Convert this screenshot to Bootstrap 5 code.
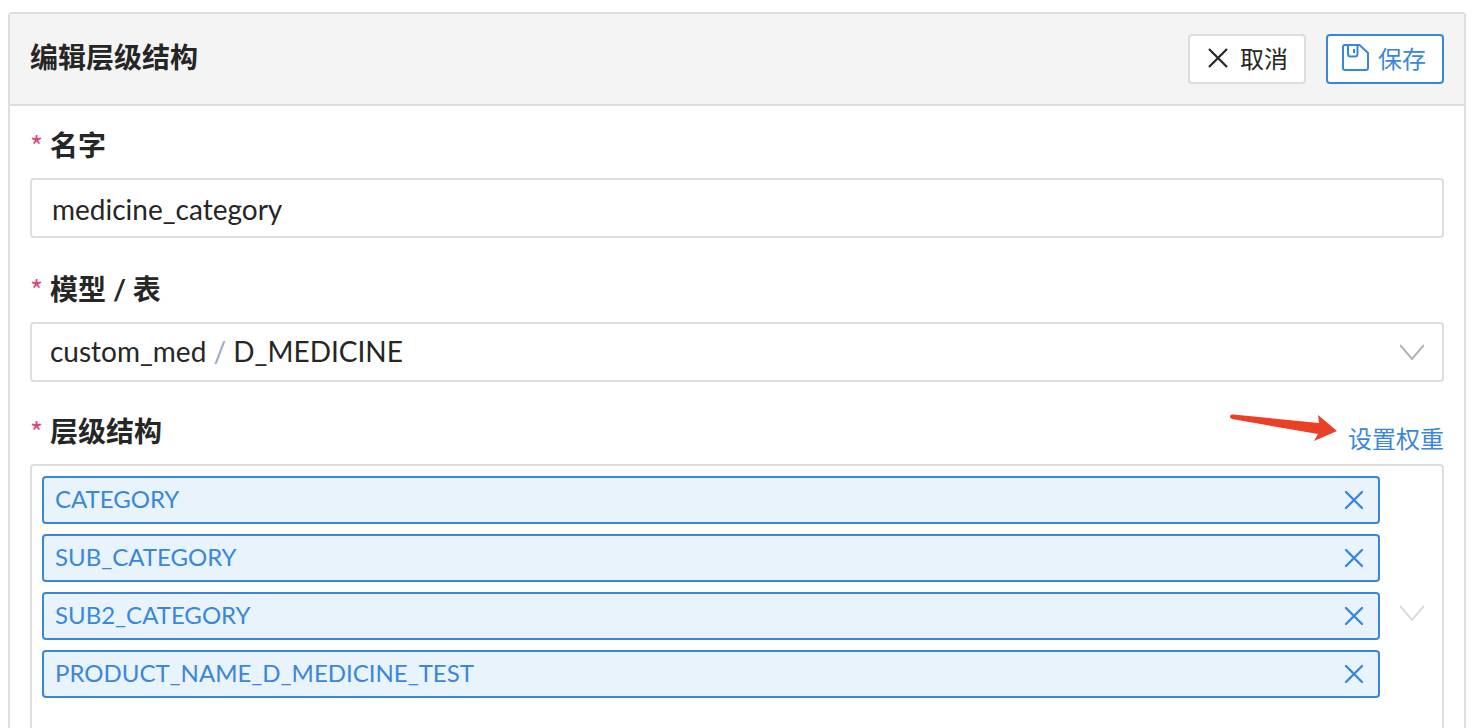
<!DOCTYPE html>
<html lang="zh-CN">
<head>
<meta charset="utf-8">
<meta name="viewport" content="width=device-width, initial-scale=1">
<title>编辑层级结构</title>
<link href="https://cdn.jsdelivr.net/npm/bootstrap@5.3.0/dist/css/bootstrap.min.css" rel="stylesheet">
<style>
  :root { --line: #dddddd; --ink: #262626; --accent: #3a87d9; --accent-bg: #e8f3fc; }
  body { font-family: Lato, "Noto Sans CJK SC", sans-serif; font-size: 28px; line-height: 40px; color: var(--ink); background: #fff; padding: 12px 12px 0 8px; }
  svg { display: block; flex: none; fill: none; }
  .panel { border: 2px solid var(--line); border-radius: 4px; }
  .panel-head { background: #f4f4f4; border-bottom: 2px solid var(--line); padding: 20px; }
  .panel-head h1 { font-size: 28px; line-height: 40px; font-weight: 700; padding-bottom: 4px; }
  .panel-main { padding: 20px; }
  .actions { gap: 20px; }
  .action { --bs-btn-font-size: 24px; --bs-btn-line-height: 46px; --bs-btn-border-width: 2px; --bs-btn-border-radius: 4px; --bs-btn-bg: #fff; --bs-btn-color: var(--ink); --bs-btn-border-color: var(--line); --bs-btn-hover-border-color: var(--accent); --bs-btn-hover-color: var(--accent); gap: 8px; padding: 0 16px 0 14px; }
  .action svg { margin-bottom: 2px; }
  .action-save { --bs-btn-color: var(--accent); --bs-btn-border-color: var(--accent); }
  .field-group { margin-bottom: 32px; }
  .field-group + .field-group { margin-bottom: 30px; }
  .field-label { display: flex; font-weight: 700; line-height: 38px; height: 38px; margin-bottom: 14px; }
  .required::before { content: "*"; color: #de4478; font-family: "Noto Sans CJK SC", sans-serif; font-weight: 400; margin-right: 7px; }
  .field, .field-box { border: 2px solid var(--line); border-radius: 4px; color: var(--ink); }
  .field { font-size: 28px; line-height: 38px; height: 60px; padding: 10px 20px 8px; }
  .picker .field { color: transparent; background-image: none; }
  .picker option { color: var(--ink); }
  .picker-value { inset: 0; padding: 0 20px; pointer-events: none; }
  .picker-value > span { padding-bottom: 2px; }
  .slash { color: #98a9c2; }
  .weight-link { font-size: 24px; color: var(--accent); line-height: 38px; padding-top: 8px; }
  .field-box { padding: 10px 18px 10px 10px; gap: 20px; }
  .levels { gap: 10px; padding-bottom: 52px; }
  .level { border: 2px solid var(--accent); border-radius: 4px; background: var(--accent-bg); color: var(--accent); font-size: 24px; line-height: 44px; height: 48px; padding: 0 14px 0 11px; }
  .level span { padding-bottom: 2px; }
  .level button { color: var(--accent); }
  .pointer-arrow { right: 106px; top: 2px; }
</style>
</head>
<body class="vh-100 overflow-hidden">
<form class="panel">
  <header class="panel-head d-flex align-items-center justify-content-between">
    <h1 class="mb-0">编辑层级结构</h1>
    <div class="actions d-flex">
      <button type="button" class="btn action d-flex align-items-center">
        <svg width="28" height="28" viewBox="0 0 28 28" stroke="currentColor" stroke-width="2.200"><path d="M5 5 23 23M23 5 5 23"/></svg>取消
      </button>
      <button type="submit" class="btn action action-save d-flex align-items-center">
        <svg width="28" height="28" viewBox="0 0 28 28" stroke="currentColor" stroke-width="2"><path d="M3 1H17.500L26 9V24Q26 26 24 26H3Q1 26 1 24V3Q1 1 3 1ZM6 1V10Q6 12.500 8.500 12.500H13Q15.500 12.500 15.500 10V1M12 5V9"/></svg>保存
      </button>
    </div>
  </header>
  <div class="panel-main">
    <div class="field-group">
      <label for="name" class="field-label required">名字</label>
      <input id="name" class="form-control field" type="text" value="medicine_category">
    </div>
    <div class="field-group">
      <label for="model" class="field-label required">模型 / 表</label>
      <div class="picker position-relative">
        <select id="model" class="form-select field"><option>custom_med / D_MEDICINE</option></select>
        <div class="picker-value position-absolute d-flex align-items-center justify-content-between" aria-hidden="true">
          <span>custom_med <span class="slash">/</span> D_MEDICINE</span>
          <svg width="24" height="16" viewBox="0 0 24 16" stroke="#b3b3b3" stroke-width="2"><path d="M0 1 12 15 24 1"/></svg>
        </div>
      </div>
    </div>
    <div>
      <div class="d-flex align-items-start justify-content-between position-relative">
        <span id="levels" class="field-label required">层级结构</span>
        <a href="#weights" class="weight-link text-decoration-none">设置权重</a>
        <svg class="pointer-arrow position-absolute" width="108" height="28" viewBox="0 0 108 28" aria-hidden="true"><path fill="#eb4026" d="M0 2.500Q0 0 3 .500L89 9 88 1 107 17 84 27 88 20 2 5Q0 4 0 2.500Z"/></svg>
      </div>
      <div class="field-box d-flex align-items-center" role="group" aria-labelledby="levels">
        <ul class="levels list-unstyled d-flex flex-column flex-grow-1 mb-0">
          <li class="level d-flex align-items-center justify-content-between"><span>CATEGORY</span><button type="button" class="btn p-0 border-0" aria-label="移除 CATEGORY"><svg width="20" height="20" viewBox="0 0 20 20" stroke="currentColor" stroke-width="2.400" stroke-linecap="round"><path d="M2 2 18 18M18 2 2 18"/></svg></button></li>
          <li class="level d-flex align-items-center justify-content-between"><span>SUB_CATEGORY</span><button type="button" class="btn p-0 border-0" aria-label="移除 SUB_CATEGORY"><svg width="20" height="20" viewBox="0 0 20 20" stroke="currentColor" stroke-width="2.400" stroke-linecap="round"><path d="M2 2 18 18M18 2 2 18"/></svg></button></li>
          <li class="level d-flex align-items-center justify-content-between"><span>SUB2_CATEGORY</span><button type="button" class="btn p-0 border-0" aria-label="移除 SUB2_CATEGORY"><svg width="20" height="20" viewBox="0 0 20 20" stroke="currentColor" stroke-width="2.400" stroke-linecap="round"><path d="M2 2 18 18M18 2 2 18"/></svg></button></li>
          <li class="level d-flex align-items-center justify-content-between"><span>PRODUCT_NAME_D_MEDICINE_TEST</span><button type="button" class="btn p-0 border-0" aria-label="移除 PRODUCT_NAME_D_MEDICINE_TEST"><svg width="20" height="20" viewBox="0 0 20 20" stroke="currentColor" stroke-width="2.400" stroke-linecap="round"><path d="M2 2 18 18M18 2 2 18"/></svg></button></li>
        </ul>
        <svg width="24" height="16" viewBox="0 0 24 16" stroke="#dddddd" stroke-width="2"><path d="M0 1 12 15 24 1"/></svg>
      </div>
    </div>
  </div>
</form>
<script src="https://cdn.jsdelivr.net/npm/bootstrap@5.3.0/dist/js/bootstrap.bundle.min.js"></script>
</body>
</html>
